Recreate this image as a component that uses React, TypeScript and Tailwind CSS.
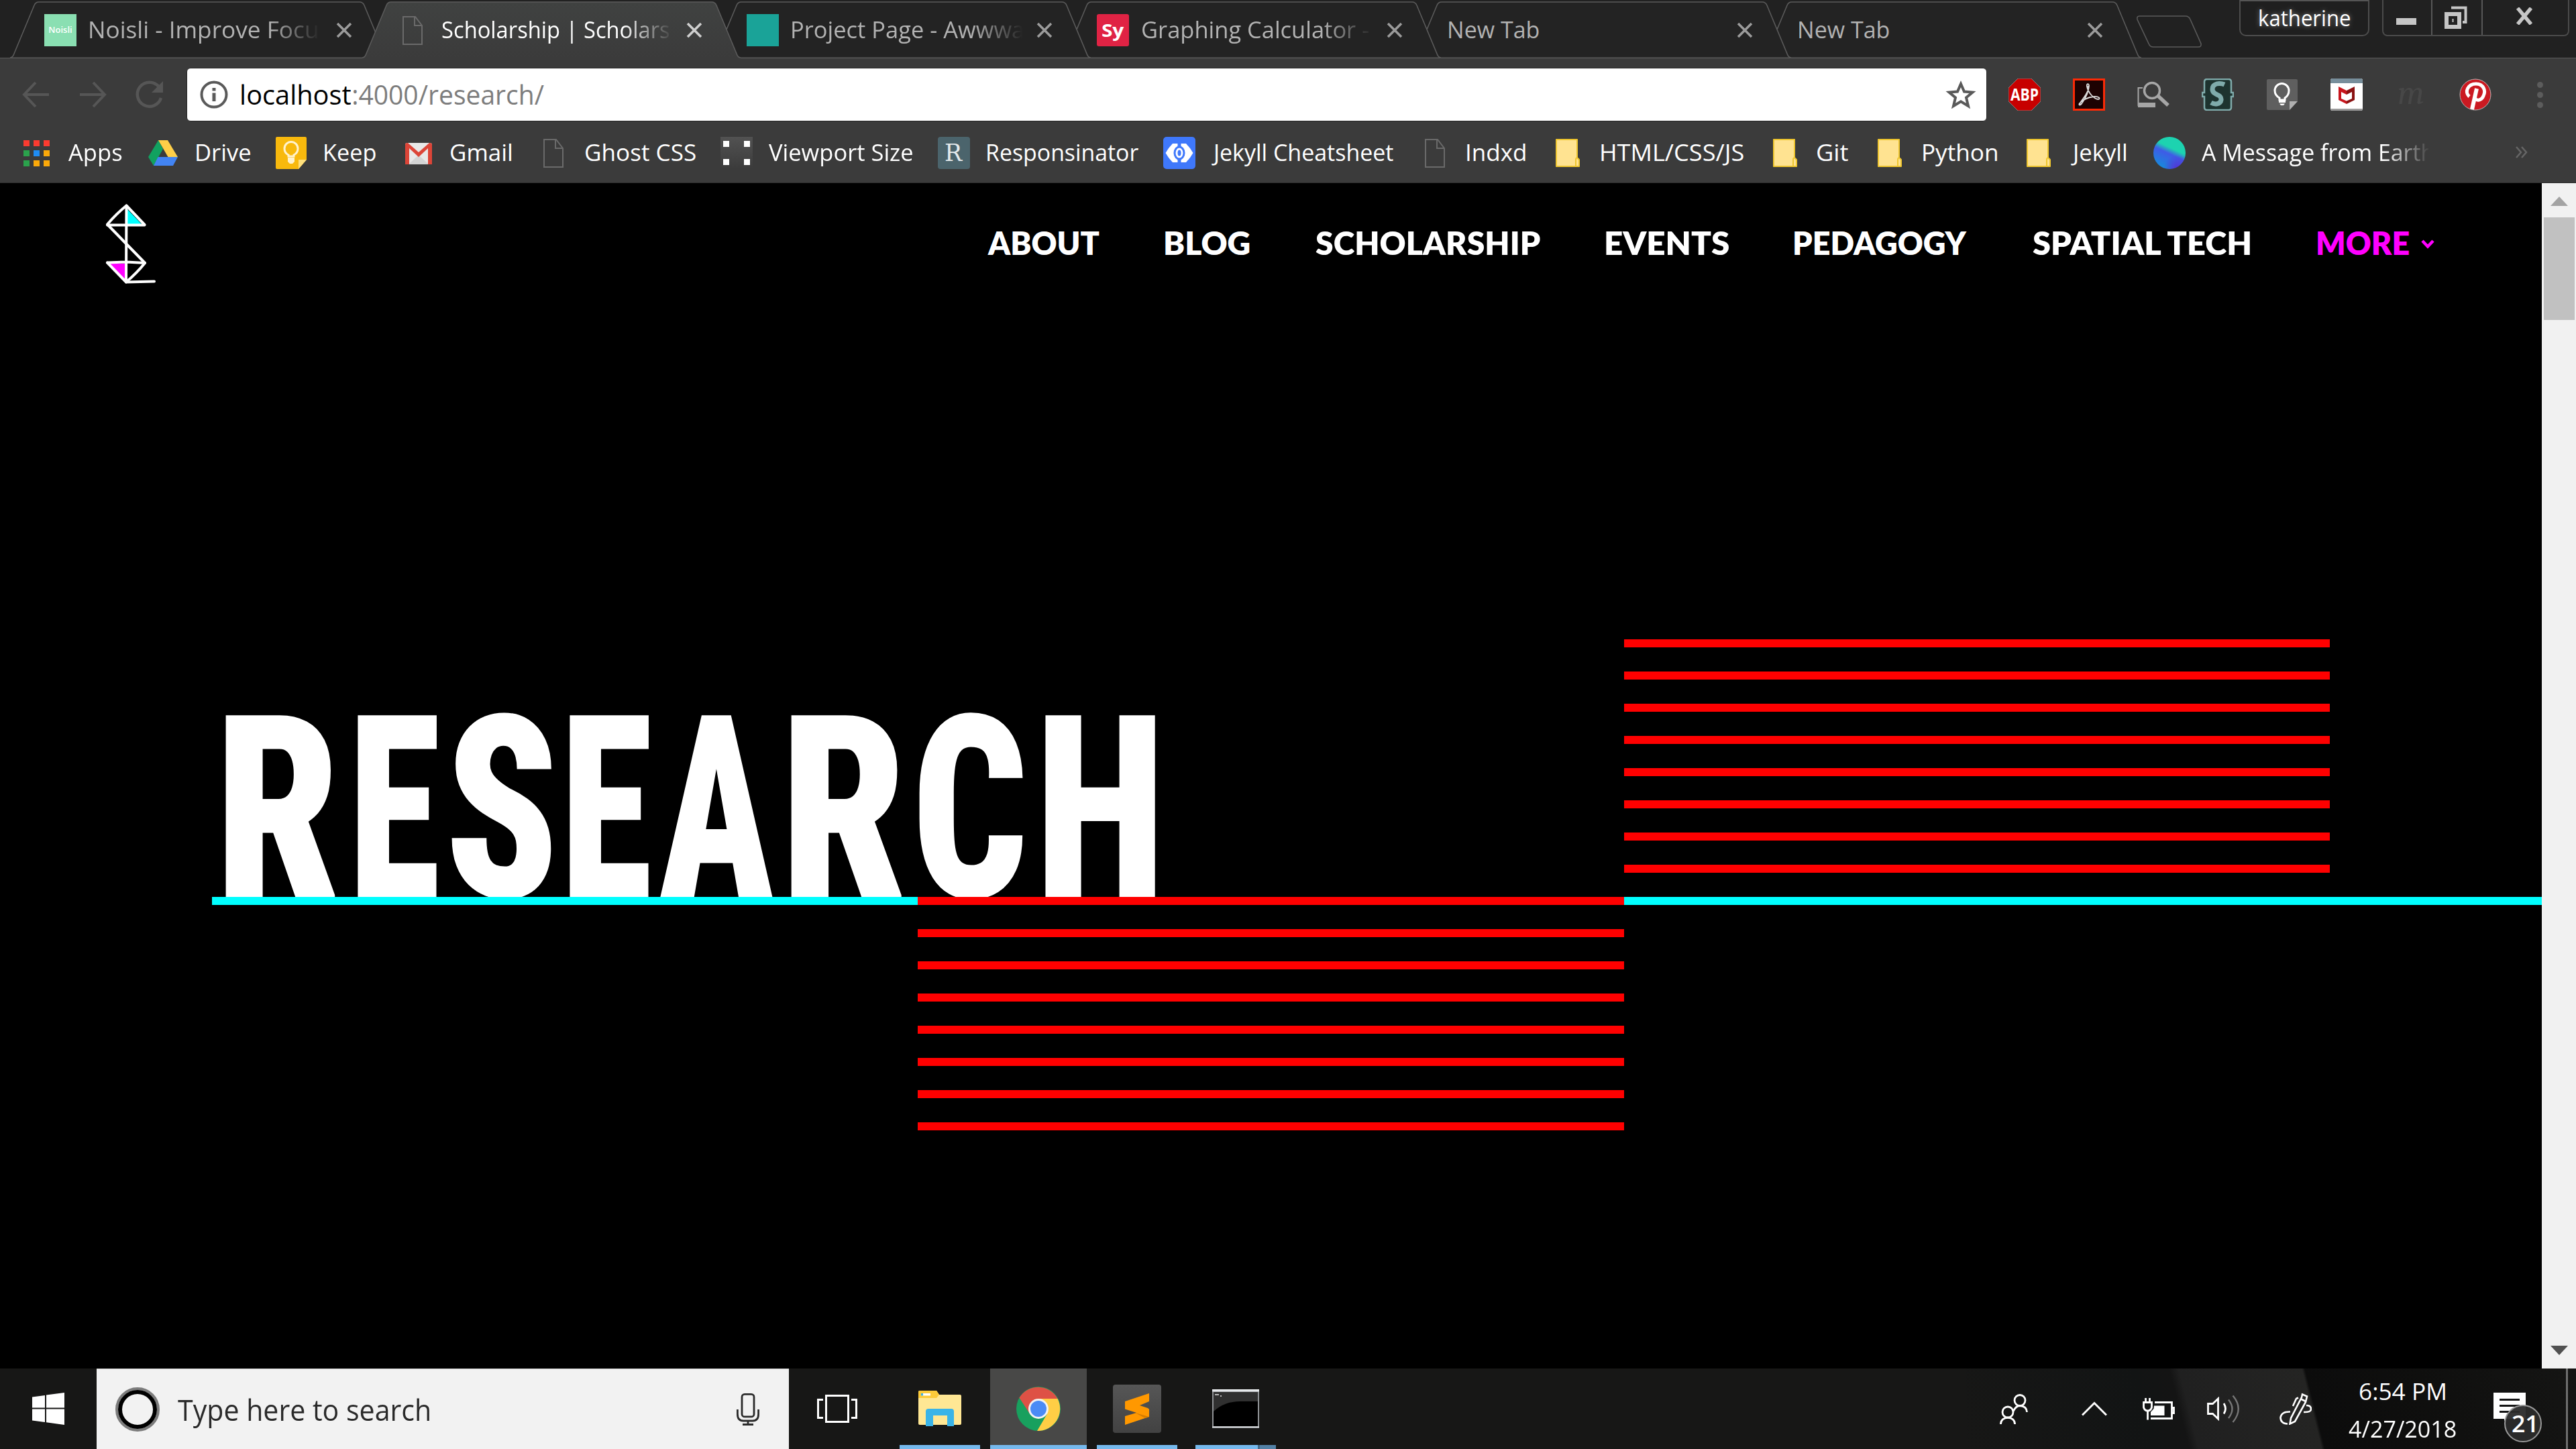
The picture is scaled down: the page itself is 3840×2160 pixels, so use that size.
import { useLayoutEffect, useRef, useState, type ReactNode } from 'react'

/* Text squeezed so that its ink spans exactly `w` pixels, starting at the box's left edge. */
function Fit({ t, w, upTo, className = '' }: { t: string; w: number; upTo?: string; className?: string }) {
  const ref = useRef<HTMLSpanElement>(null)
  const [tf, setTf] = useState('none')
  useLayoutEffect(() => {
    const el = ref.current
    if (!el) return
    const cs = getComputedStyle(el)
    const ctx = document.createElement('canvas').getContext('2d') as any
    if (!ctx) return
    ctx.font = `${cs.fontStyle} ${cs.fontWeight} ${cs.fontSize} ${cs.fontFamily}`
    if (cs.fontStretch === '75%') ctx.fontStretch = 'condensed'
    const m = ctx.measureText(upTo ?? t)
    const s = w / (m.actualBoundingBoxLeft + m.actualBoundingBoxRight)
    setTf(`translateX(${m.actualBoundingBoxLeft * s}px) scaleX(${s})`)
  }, [t, w, upTo])
  return (
    <span className={`block shrink-0 whitespace-nowrap ${className}`} style={{ width: w }}>
      <span ref={ref} className="inline-block origin-left whitespace-pre" style={{ transform: tf }}>{t}</span>
    </span>
  )
}

const UI = 'font-["Open_Sans","Noto_Sans",sans-serif]'

/* ---------- tab strip ---------- */

function DocIcon() {
  return (
    <svg viewBox="0 0 48 48" className="size-12" fill="none" stroke="#6a6a6a" strokeWidth="2">
      <path d="M10 4H28L38 17V45H10Z" />
      <path d="M27 4V17H38" />
    </svg>
  )
}

const TAB_PATH = 'M0 86Q4 86 6 80L36 8Q38 3 43 3L521 3Q526 3 528 8L558 80Q560 86 564 86'

type TabData = { title: string; upTo?: string; w: number; icon?: ReactNode; active?: boolean }

const tabs: TabData[] = [
  {
    title: 'Noisli - Improve Focus', upTo: 'Noisli - Improve Focu', w: 339,
    icon: <div className="flex size-12 items-center justify-center bg-[#8adfb2] text-[13px] font-semibold text-white">Noisli</div>,
  },
  { title: 'Scholarship | Scholars', w: 339, icon: <DocIcon />, active: true },
  { title: 'Project Page - Awwwa', upTo: 'Project Page - Awww', w: 327, icon: <div className="size-12 bg-[#1aa398]" /> },
  {
    title: 'Graphing Calculator -', w: 337,
    icon: <div className="flex size-12 items-center justify-center rounded-[3px] bg-[#e02344] text-[27px] font-bold text-white"><Fit t="Sy" w={33} /></div>,
  },
  { title: 'New Tab', w: 134 },
  { title: 'New Tab', w: 134 },
]

function Tab({ tab, i }: { tab: TabData; i: number }) {
  const first = i === 0
  return (
    <div
      className={`relative flex h-[87px] shrink-0 items-center ${first ? 'w-[525px]' : 'w-[522px]'}`}
      style={{ zIndex: tab.active ? 20 : 10 - i }}
    >
      <svg className="absolute left-0 top-0 h-[87px] w-[564px]" viewBox="0 0 564 87" preserveAspectRatio="none">
        <defs>
          <linearGradient id="activeTab" x1="0" y1="0" x2="0" y2="1">
            <stop offset="0" stopColor="#404241" />
            <stop offset="1" stopColor="#3b3b3b" />
          </linearGradient>
        </defs>
        <path d={tab.active ? TAB_PATH + 'V87H0Z' : TAB_PATH} fill={tab.active ? 'url(#activeTab)' : '#232323'} />
        <path d={TAB_PATH} fill="none" stroke="#5b5b5b" strokeWidth="1.6" />
        {!tab.active && <path d="M2 86.3H562" stroke="#5b5b5b" strokeWidth="1.5" />}
      </svg>
      <div className={`relative flex flex-1 items-center ${tab.icon ? 'pl-[51px]' : 'pl-[54px]'} pt-[3px]`}>
        {tab.icon}
        <div
          className={`${tab.icon ? 'ml-5 w-[344px] [mask-image:linear-gradient(to_right,#000_78%,transparent)]' : 'w-[380px]'} overflow-hidden pb-[2px] text-[35px] leading-[50px] ${tab.active ? 'text-white' : 'text-[#b2b2b2]'}`}
        >
          <Fit t={tab.title} upTo={tab.upTo} w={tab.w} />
        </div>
      </div>
      <svg viewBox="0 0 24 24" className={`absolute top-[33px] size-6 ${first ? 'left-[486px]' : 'left-[483px]'}`} stroke={tab.active ? '#cfcfcf' : '#9b9b9b'} strokeWidth="3.600">
        <path d="M2 2L22 22M22 2L2 22" />
      </svg>
    </div>
  )
}

function TabStrip() {
  return (
    <div className="relative flex h-[87px] border-b border-[#5b5b5b] bg-[#212121] pl-[15px]">
      {tabs.map((tab, i) => <Tab key={i} tab={tab} i={i} />)}
      <svg viewBox="0 0 100 50" className="ml-[34px] mt-[22px] h-[50px] w-[100px] shrink-0" fill="none" stroke="#5b5b5b" strokeWidth="1.6">
        <path d="M5 2H74Q79 2 81 7L97 43Q98 48 93 48H26Q21 48 19 43L2 7Q1 2 5 2Z" />
      </svg>
      <div className="absolute right-[308px] top-0 flex h-[54px] w-[194px] items-center justify-center rounded-b-[10px] border-2 border-[#4d4d4d] border-t-[#555] bg-[#1f1f1f] text-[33px] text-white [text-shadow:0_0_8px_#888]">
        <Fit t="katherine" w={135} className="leading-[48px]" />
      </div>
      <div className="absolute right-[10px] top-0 flex h-[54px] w-[279px] overflow-hidden rounded-b-[8px] border-2 border-t-0 border-[#4a4a4a] bg-[#212121]">
        <div className="flex w-[73px] items-center justify-center border-r-2 border-[#575757] pr-1 pt-[12px]">
          <div className="h-[10px] w-[30px] bg-[#c6c6c6]" />
        </div>
        <div className="flex w-[75px] items-center justify-center border-r-2 border-[#575757] pr-1">
          <svg viewBox="0 0 34 34" className="size-[34px]" fill="none" stroke="#c6c6c6">
            <path d="M3 12H22V31H3Z" strokeWidth="6" />
            <path d="M10 2.5H31.500V24H27" strokeWidth="4" />
            <path d="M12.500 19V24" strokeWidth="2" />
          </svg>
        </div>
        <div className="flex flex-1 items-center justify-center pb-1 pr-1">
          <svg viewBox="0 0 28 26" className="h-[26px] w-[28px]" stroke="#c6c6c6" strokeWidth="5.500">
            <path d="M4 1L24 25M24 1L4 25" />
          </svg>
        </div>
      </div>
    </div>
  )
}

/* ---------- toolbar ---------- */

const extensions: ReactNode[] = [
  <svg viewBox="0 0 48 48" className="size-12">
    <path d="M14 0H34L48 14V34L34 48H14L0 34V14Z" fill="#c70000" stroke="#8f8f8f" strokeWidth=".8" />
    <text x="24" y="32.5" textAnchor="middle" textLength="42" lengthAdjust="spacingAndGlyphs" fontSize="25" fontWeight="700" fontFamily="Open Sans" fill="#fff">ABP</text>
  </svg>,
  <svg viewBox="0 0 48 48" className="size-12">
    <path d="M1.500 1.500H46.500V46.500H1.500Z" fill="#1d0202" stroke="#fb2a06" strokeWidth="3" />
    <path d="M10 38C14 30 24 22 24 11C24 7 20 7 21 12C23 22 32 31 38 31C42 30 38 26 31 27C22 28 13 33 10 37C8 40 11 41 14 36C19 29 24 21 23 11" fill="none" stroke="#ddd" strokeWidth="1.800" />
  </svg>,
  <svg viewBox="0 0 48 48" className="size-12" fill="none" stroke="#a6a6a6">
    <path d="M8 14H1.500V40H26" strokeWidth="2" />
    <path d="M1 36H27V43H1Z" fill="#a6a6a6" stroke="none" />
    <circle cx="22" cy="18" r="11.500" strokeWidth="3.500" />
    <path d="M31 26L46 40" strokeWidth="5.500" />
  </svg>,
  <svg viewBox="0 0 48 48" className="size-12">
    <path d="M8 1H40Q44 1 44 5V21H47V27H44V43Q44 47 40 47H8Q4 47 4 43V27H1V21H4V5Q4 1 8 1Z" fill="#1d332f" stroke="#7fabab" strokeWidth="2.500" />
    <path d="M34 9C27 6 16 7 16 16C16 26 30 22 29 32C28 39 19 39 14 36" fill="none" stroke="#7fabab" strokeWidth="7" />
  </svg>,
  <svg viewBox="0 0 48 48" className="size-12">
    <path d="M3 1H45Q47 1 47 3V34L35 47H3Q1 47 1 45V3Q1 1 3 1Z" fill="#5f5f5f" />
    <path d="M47 34H35V47Z" fill="#b0b0b0" />
    <path d="M20 32V29Q13 25 13 18A10.500 10.500 0 0 1 34 18Q34 25 28 29V32Z" fill="none" stroke="#fff" strokeWidth="3" />
    <path d="M19 33H29V36H19ZM20 37.500H28L26 40H22Z" fill="#fff" />
  </svg>,
  <svg viewBox="0 0 48 48" className="size-12">
    <rect x="0" y="0" width="48" height="48" rx="3" fill="#fff" />
    <path d="M3 0H45Q48 0 48 3V7H0V3Q0 0 3 0Z" fill="#778e9b" />
    <path d="M0 45H48Q48 48 45 48H3Q0 48 0 45Z" fill="#9c9c9c" />
    <path d="M12 12L24 18V24L16 20V30L24 33.500V38L12 32Z" fill="#c8161d" />
    <path d="M36 12L24 18V24L32 20V30L24 33.500V38L36 32Z" fill="#8a1212" />
  </svg>,
  <div className="flex size-12 items-center justify-center pb-1 font-serif text-[50px] italic leading-none text-[#474747]">m</div>,
  <svg viewBox="0 0 48 48" className="size-12">
    <circle cx="24" cy="24" r="23" fill="#cb1a22" stroke="#b9b9b9" strokeWidth="1" />
    <path d="M15 27C7 20 13 8 25 8C36 8 40 18 36 26C33 33 26 34 23 29" fill="none" stroke="#fff" strokeWidth="5" />
    <path d="M26 15L19 46" stroke="#fff" strokeWidth="6" />
  </svg>,
]

function Toolbar() {
  return (
    <div className="flex h-[108px] items-center pl-[33px]">
      <svg viewBox="0 0 42 40" className="h-10 w-[42px] shrink-0" fill="none" stroke="#565656" strokeWidth="4">
        <path d="M20 2L3 20L20 38M3 20H40" />
      </svg>
      <svg viewBox="0 0 42 40" className="ml-[42px] h-10 w-[42px] shrink-0" fill="none" stroke="#565656" strokeWidth="4">
        <path d="M22 2L39 20L22 38M39 20H2" />
      </svg>
      <svg viewBox="0 0 42 42" className="ml-[43px] size-[42px] shrink-0" fill="none" stroke="#565656" strokeWidth="4.500">
        <path d="M34.500 9A18 18 0 1 0 38 26" />
        <path d="M41 1V18H24Z" fill="#565656" stroke="none" />
      </svg>
      <div className="ml-[34px] flex h-[80px] w-[2684px] shrink-0 items-center rounded-[6px] border border-[#262626] bg-white pl-[19px] pr-[15px]">
        <svg viewBox="0 0 42 42" className="size-[42px]">
          <circle cx="21" cy="21" r="18.500" fill="none" stroke="#5a5a5a" strokeWidth="4" />
          <path d="M18.500 11H23.500V15.500H18.500ZM18.500 18.500H23.500V31H18.500Z" fill="#5a5a5a" />
        </svg>
        <div className="ml-5 flex pb-[2px] text-[41px] leading-[60px]">
          <Fit t="localhost" w={163} className="text-black" />
          <Fit t=":4000/research/" w={284} className="ml-1 text-[#7d7d7d]" />
        </div>
        <svg viewBox="0 0 46 44" className="ml-auto h-11 w-[46px]" fill="none" stroke="#5a5a5a" strokeWidth="4">
          <path d="M23 6L28 17.500L40.500 18.500L31 26.500L34 39L23 32.300L12 39L15 26.500L5.500 18.500L18 17.500Z" />
        </svg>
      </div>
      <div className="ml-[32px] flex shrink-0 gap-12">
        {extensions.map((e, i) => <div key={i}>{e}</div>)}
      </div>
      <div className="ml-[68px] flex flex-col gap-[6px]">
        {[0, 1, 2].map(i => <div key={i} className="size-[9px] rounded-full bg-[#5c5c5c]" />)}
      </div>
    </div>
  )
}

/* ---------- bookmarks ---------- */

const FolderIcon = () => (
  <svg viewBox="0 0 48 48" className="size-12">
    <path d="M7 4H38V31L41 34V44H7Z" fill="#ffe391" stroke="#efc62f" strokeWidth="2" strokeLinejoin="round" />
    <path d="M36 44V34Q36 31 39 31" fill="none" stroke="#efc62f" strokeWidth="2" />
  </svg>
)

const AppsIcon = () => (
  <div className="grid grid-cols-3 gap-[6px]">
    {['bg-[#fb3b30]', 'bg-[#fb3b30]', 'bg-[#fb3b30]', 'bg-[#2ba24c]', 'bg-[#1f8cf5]', 'bg-[#fba90a]', 'bg-[#2ba24c]', 'bg-[#fba90a]', 'bg-[#fba90a]'].map((c, i) => (
      <div key={i} className={`size-[9px] ${c}`} />
    ))}
  </div>
)

const bookmarks: { label: string; upTo?: string; w: number; item: number; stem?: boolean; icon: ReactNode }[] = [
  { label: 'Apps', w: 80, item: 189, icon: <AppsIcon /> },
  {
    label: 'Drive', w: 80, item: 191, stem: true, icon: (
      <svg viewBox="0 0 48 48" className="size-12">
        <path d="M17 5L24 18L10 43L2 30Z" fill="#11a160" />
        <path d="M17 5H31L46 30H31.500Z" fill="#ffcf48" />
        <path d="M16.500 30H46L39 43H10Z" fill="#4284f3" />
      </svg>
    ),
  },
  {
    label: 'Keep', w: 76, item: 190, stem: true, icon: (
      <svg viewBox="0 0 48 48" className="size-12">
        <path d="M3 0H45Q47 0 47 2V34L35 48H3Q1 48 1 46V2Q1 0 3 0Z" fill="#f8b90d" />
        <path d="M47 34H35V48Z" fill="#ffe07d" />
        <path d="M20 29V27Q14 24 14 17.500A10 10 0 0 1 34 17.500Q34 24 28 27V29Z" fill="none" stroke="#fff3cd" strokeWidth="3" />
        <path d="M19 31H29V37L26 40H22L19 37Z" fill="#fff3cd" />
      </svg>
    ),
  },
  {
    label: 'Gmail', w: 90, item: 201, icon: (
      <svg viewBox="0 0 48 48" className="size-12">
        <rect x="4" y="9" width="40" height="32" rx="3" fill="#e8e8e8" />
        <path d="M9 41L24 27L39 41Z" fill="#d4d4d4" />
        <path d="M4 12Q4 9 7 9H8L24 23L40 9H41Q44 9 44 12V41H38V17L24 30L10 17V41H4Z" fill="#dc4538" />
      </svg>
    ),
  },
  { label: 'Ghost CSS', w: 164, item: 273, icon: <DocIcon /> },
  {
    label: 'Viewport Size', w: 214, item: 324, icon: (
      <div className="grid size-12 grid-cols-2 content-between justify-between bg-gradient-to-b from-[#525252] to-[#3b3b3b] px-1 py-[6px]">
        {['justify-self-start', 'justify-self-end', 'justify-self-start', 'justify-self-end'].map((c, i) => (
          <div key={i} className={`size-[9px] bg-white ${c}`} />
        ))}
      </div>
    ),
  },
  {
    label: 'Responsinator', w: 225, item: 336, stem: true,
    icon: <div className="flex size-12 items-center justify-center rounded-[4px] bg-[#4b646c] font-['DejaVu_Serif',serif] text-[36px] leading-none text-[#e4eaec]"><Fit t="R" w={26} /></div>,
  },
  {
    label: 'Jekyll Cheatsheet', w: 271, item: 381, icon: (
      <svg viewBox="0 0 48 48" className="size-12">
        <rect width="48" height="48" rx="5" fill="#3f78fb" />
        <path d="M14 10H34L40 17L44.500 24L40 31L34 38H14L8 31L3.500 24L8 17Z" fill="#fff" />
        <path d="M21.500 9H26.500V16H21.500ZM21.500 32H26.500V39H21.500Z" fill="#3f78fb" />
        <ellipse cx="24" cy="24" rx="8.500" ry="10.500" fill="#3f78fb" />
        <ellipse cx="24" cy="24" rx="5.500" ry="7.500" fill="#fff" />
        <ellipse cx="24" cy="24" rx="2.500" ry="4.500" fill="#3f78fb" />
      </svg>
    ),
  },
  { label: 'Indxd', w: 87, item: 198, icon: <DocIcon /> },
  { label: 'HTML/CSS/JS', w: 212, item: 324, stem: true, icon: <FolderIcon /> },
  { label: 'Git', w: 46, item: 156, icon: <FolderIcon /> },
  { label: 'Python', w: 110, item: 222, stem: true, icon: <FolderIcon /> },
  { label: 'Jekyll', w: 82, item: 195, icon: <FolderIcon /> },
  {
    label: 'A Message from Earth', upTo: 'A Message from Eart', w: 326, item: 410,
    icon: <div className="size-12 rounded-full bg-[radial-gradient(circle_at_75%_100%,#5a2bd8_0%,transparent_35%),linear-gradient(25deg,#1b86dc_15%,#3f5be6_48%,#1dd3b0_62%)]" />,
  },
]

function Bookmarks() {
  return (
    <div className="flex h-[78px] items-start border-b border-[#2b2b2b] pl-[30px]">
      {bookmarks.map(b => (
        <div key={b.label} className="flex h-[66px] shrink-0 items-center" style={{ width: b.item }}>
          <div className="flex size-12 shrink-0 items-center justify-center">{b.icon}</div>
          <div
            className={`flex-1 pb-[3px] text-[35px] leading-[50px] text-white ${b.stem ? 'ml-[26px]' : 'ml-6'} ${b.upTo ? 'overflow-hidden [mask-image:linear-gradient(to_right,#000_80%,transparent_101%)]' : ''}`}
          >
            <Fit t={b.label} upTo={b.upTo} w={b.w} />
          </div>
        </div>
      ))}
      <svg viewBox="0 0 20 18" className="ml-[129px] mt-[23px] h-[18px] w-5" fill="none" stroke="#666" strokeWidth="2.500">
        <path d="M2 1L9 9L2 17M10 1L17 9L10 17" />
      </svg>
    </div>
  )
}

/* ---------- page ---------- */

function Logo() {
  return (
    <svg viewBox="0 0 76 122" className="h-[122px] w-[76px]" fill="none" stroke="#fff" strokeWidth="4" strokeLinejoin="round" strokeLinecap="round">
      <path d="M32 8L54 31H32Z" fill="#0ff" stroke="none" />
      <path d="M4 90H32V118Z" fill="#f0f" stroke="none" />
      <path d="M31.500 3.500Q16 16 3 31.500L59 89Q47 104 31 117.500L3 88.500M31.500 3.500L58.500 32" />
      <path d="M3 32.500H58.500M3 88.500L31 87.500L59 89M31.500 3.500L31 117.500L73 116.500" />
    </svg>
  )
}

const nav: [string, number][] = [['ABOUT', 167], ['BLOG', 126], ['SCHOLARSHIP', 335], ['EVENTS', 183], ['PEDAGOGY', 257], ['SPATIAL TECH', 327]]

const letters: [string, number, number][] = [
  ['R', 20, 164.5], ['E', 32, 122], ['S', 18.5, 149], ['E', 27, 122],
  ['A', 12, 171], ['R', 25, 166], ['C', 23.5, 160], ['H', 29.5, 164],
]

const RedLines = ({ className }: { className: string }) => (
  <div className={`flex flex-col gap-9 ${className}`}>
    {Array.from({ length: 8 }, (_, i) => <div key={i} className="h-3 bg-[#f00]" />)}
  </div>
)

function Page() {
  return (
    <div className="flex h-[1767px] bg-black">
      <div className="w-[3789px]">
        <header className="flex h-[178px] items-center justify-between pl-[157px] pr-[160px]">
          <div className="pt-1"><Logo /></div>
          <nav className="flex items-center gap-[98px] font-['Lato',sans-serif] text-[47.500px] font-extrabold leading-[60px] text-white">
            {nav.map(([t, w]) => <Fit key={t} t={t} w={w} />)}
            <div className="flex items-center text-[#f0f]">
              <Fit t="MORE" w={136} />
              <svg viewBox="0 0 20 14" className="ml-[18px] mt-[3px] h-[14px] w-5" fill="none" stroke="#f0f" strokeWidth="4.500">
                <path d="M2 2L10 10.500L18 2" />
              </svg>
            </div>
          </nav>
        </header>
        <main className="grid grid-cols-[316px_1052px_1053px_1052px_316px] grid-rows-[384px_auto] pt-[502px]">
          <h1 className="col-span-2 col-start-2 row-start-1 flex overflow-hidden pt-[64px] font-['Roboto',sans-serif] text-[381px] font-black leading-none text-white [font-stretch:75%]">
            {letters.map(([ch, gap, w], i) => (
              <span key={i} className="block shrink-0" style={{ marginLeft: gap }}><Fit t={ch} w={w} /></span>
            ))}
          </h1>
          <RedLines className="col-start-4 row-start-1" />
          <div className="col-start-2 row-start-2 h-3 bg-[#0ff]" />
          <RedLines className="col-start-3 row-start-2" />
          <div className="col-span-2 col-start-4 row-start-2 h-3 bg-[#0ff]" />
        </main>
      </div>
      <div className="flex w-[51px] flex-col items-center bg-[#f1f1f1]">
        <svg viewBox="0 0 26 14" className="mt-[20px] h-[14px] w-[26px]"><path d="M0 14L13 0L26 14Z" fill="#a3a3a3" /></svg>
        <div className="mt-[17px] h-[153px] w-[46px] bg-[#c1c1c1]" />
        <svg viewBox="0 0 26 14" className="mb-[20px] mt-auto h-[14px] w-[26px]"><path d="M0 0L13 14L26 0Z" fill="#505050" /></svg>
      </div>
    </div>
  )
}

/* ---------- taskbar ---------- */

const apps: { icon: ReactNode; bar: ReactNode; active?: boolean }[] = [
  {
    icon: (
      <svg viewBox="0 0 64 54" className="h-[54px] w-16">
        <path d="M2 0H27L31 6H62Q64 6 64 8V49Q64 51 62 51H2Q0 51 0 49V2Q0 0 2 0Z" fill="#ffe794" />
        <path d="M2 0H27L31 6L27 11H0V2Q0 0 2 0Z" fill="#fdcb3a" />
        <path d="M4 4H18V7.500H4Z" fill="#fff" /><path d="M4 4H7V7.500H4Z" fill="#3ab0e6" />
        <path d="M11 53V31Q11 27 15 27H49Q53 27 53 31V53H43V37H22V53Z" fill="#3ab4e8" />
      </svg>
    ),
    bar: <div className="h-[6px] w-[120px] bg-[#76b9ed]" />,
  },
  {
    active: true,
    icon: (
      <svg viewBox="0 0 66 66" className="size-[66px]">
        <circle cx="33" cy="33" r="33" fill="#18a05e" />
        <path d="M33 18H61.600A33 33 0 0 1 31 66L46 40.500Z" fill="#ffce45" />
        <path d="M4.400 16.500A33 33 0 0 1 61.600 18H33L20 40.500Z" fill="#de5145" />
        <circle cx="33" cy="33" r="15" fill="#f2f2f2" />
        <circle cx="33" cy="33" r="12" fill="#4b8bf5" />
      </svg>
    ),
    bar: <div className="h-[6px] w-[144px] bg-[#76b9ed]" />,
  },
  {
    icon: (
      <div className="flex size-[72px] items-center justify-center rounded-[4px] bg-gradient-to-b from-[#565656] to-[#424242]">
        <svg viewBox="0 0 36 47" className="h-[47px] w-9">
          <path d="M0 34L36 23.500V35L0 47Z" fill="#ff9800" />
          <path d="M0 23.500L36 35V25Q36 23 34 22L22 18L36 12V0L0 12Z" fill="#ff9800" />
          <path d="M15 29L36 35L30 37Z" fill="#d67d00" />
        </svg>
      </div>
    ),
    bar: <div className="h-[6px] w-[120px] bg-[#76b9ed]" />,
  },
  {
    icon: (
      <svg viewBox="0 0 70 58" className="h-[58px] w-[70px]">
        <rect width="70" height="58" fill="#8e9194" />
        <rect width="70" height="3.500" fill="#e6e9ec" /><rect y="55.500" width="70" height="1.500" fill="#e6e9ec" />
        <rect x="2" y="4" width="66" height="51" fill="#303030" />
        <path d="M2 33Q18 18 42 18H68V55H2Z" fill="#000" />
        <path d="M4 8H10M12 10H14" stroke="#bbb" strokeWidth="2" />
      </svg>
    ),
    bar: <div className="flex h-[6px] w-[120px]"><div className="w-[93px] bg-[#76b9ed]" /><div className="w-[3px] bg-[#446a88]" /><div className="flex-1 bg-[#5381a6]" /></div>,
  },
]

function Taskbar() {
  return (
    <div className="flex h-[120px] bg-[#171716]">
      <div className="flex w-[144px] items-center justify-center">
        <svg viewBox="0 0 48 48" className="size-12" fill="#fff">
          <path d="M0 6.500L19 4V22.500H0ZM21 3.500L48 0V22.500H21ZM0 24.500H19V44L0 41.500ZM21 24.500H48V48L21 44.300Z" />
        </svg>
      </div>
      <div className="flex w-[1032px] items-center border-t border-[#c4c4c4] bg-[#f2f2f2] pl-7 pr-[44px]">
        <svg viewBox="0 0 66 66" className="size-[66px]" fill="none">
          <circle cx="33" cy="33" r="31" stroke="#7c7c7c" strokeWidth="4" />
          <circle cx="33" cy="33" r="26" stroke="#000" strokeWidth="6" />
        </svg>
        <Fit t="Type here to search" w={375} className="ml-[27px] pt-[2px] text-[43px] leading-[60px] text-[#2a2a2a]" />
        <svg viewBox="0 0 34 48" className="ml-auto h-12 w-[34px]" fill="none" stroke="#2b2b2b" strokeWidth="2.800">
          <rect x="8" y="1.400" width="18" height="33.500" rx="4" />
          <path d="M1.400 24V31Q1.400 41 10 41H24Q32.600 41 32.600 31V24M17 41V46.500M9 46.500H25" />
        </svg>
      </div>
      <div className="mr-[9px] flex w-[144px] items-center justify-center">
        <svg viewBox="0 0 60 42" className="h-[42px] w-[60px]" fill="none" stroke="#fff" strokeWidth="3">
          <path d="M13.500 1.500H46.500V40.500H13.500ZM9 7.500H1.500V34.500H9M51 7.500H58.500V34.500H51" />
        </svg>
      </div>
      <div className="flex gap-[3px]">
        {apps.map((a, i) => (
          <div key={i} className={`relative flex w-[144px] items-center justify-center ${a.active ? 'bg-[#484847]' : ''}`}>
            {a.icon}
            <div className="absolute inset-x-0 bottom-0 flex justify-center">{a.bar}</div>
          </div>
        ))}
      </div>
      <div className="ml-auto flex w-[910px] bg-[linear-gradient(76deg,#171716_0%,#121414_30%,#141414_35.500%,#202020_37%,#242423_56.500%,#0c0c0c_57%,#0f0f0e_75%,#151514_100%)]">
        <div className="flex w-[144px] items-center justify-center">
          <svg viewBox="0 0 42 45" className="h-[45px] w-[42px]" fill="none" stroke="#fff" strokeWidth="2.800">
            <circle cx="30" cy="9.500" r="8" /><circle cx="12" cy="27" r="8" />
            <path d="M1.400 45C1.400 32 22.600 32 22.600 45M20 26Q24 17.500 30 17.500Q40 18 40.500 27" />
          </svg>
        </div>
        <div className="flex w-24 items-center justify-center">
          <svg viewBox="0 0 38 22" className="h-[22px] w-[38px]" fill="none" stroke="#fff" strokeWidth="3"><path d="M1 20.500L19 2.500L37 20.500" /></svg>
        </div>
        <div className="flex w-24 items-center justify-center">
          <svg viewBox="0 0 48 34" className="h-[34px] w-12" fill="none" stroke="#fff" strokeWidth="2.800">
            <path d="M18 7.500H43.500V31.500H12M43 15.500H46.500V23.500H43M7.500 20V33.500" />
            <path d="M1.500 7.500H13.500V15Q12 20 7.500 20Q3 20 1.500 15ZM4.500 7V1M10.500 7V1" />
            <path d="M17 12.500H32.500V27H12V22L16.500 17Z" fill="#fff" stroke="none" />
          </svg>
        </div>
        <div className="flex w-24 items-center justify-center">
          <svg viewBox="0 0 48 42" className="h-[42px] w-12" fill="none" stroke="#fff" strokeWidth="2.800">
            <path d="M1.500 13.500H8.500L16.500 6V36L8.500 28.500H1.500ZM25 13Q30 21 25 28.500" />
            <path d="M32 7.500Q43 21 32 35M38.500 1.500Q55 21 38.500 41" stroke="#777" strokeWidth="2.400" />
          </svg>
        </div>
        <div className="flex w-[120px] items-center justify-center">
          <svg viewBox="0 0 48 48" className="size-12" fill="none" stroke="#fff" strokeWidth="2.600">
            <path d="M34 2.500L41 5.500L39 14L23 43L15.500 46.500L17 38L33 7ZM31 9L39 13M28 7.500L25 9L20 20M16 28.500Q3 28 1.500 37Q1.500 46 12 46.500M40 19Q47 19 47 24.500Q47 29.500 36 29" />
          </svg>
        </div>
        <div className="flex w-[198px] flex-col items-center justify-center pt-[2px] text-[35.500px] leading-[56px] text-white">
          <Fit t="6:54 PM" w={127} />
          <Fit t="4/27/2018" w={160} />
        </div>
        <div className="relative flex w-[145px] pl-[37px] pt-9">
          <svg viewBox="0 0 48 42" className="h-[42px] w-12">
            <path d="M0 0H48V39H19L16 42V39H0Z" fill="#fff" />
            <path d="M9 10.500H39M9 19.500H39M9 28.500H39" stroke="#151515" strokeWidth="3" />
          </svg>
          <div className="absolute left-[53px] top-[54px] flex size-[56px] items-center justify-center rounded-full border-2 border-[#9a9a9a] bg-[#2b2b2b]/95 text-[34px] font-semibold leading-none text-white">
            <Fit t="21" w={33} />
          </div>
        </div>
        <div className="w-[3px] bg-[#6f6f6f]" />
        <div className="w-3" />
      </div>
    </div>
  )
}

export default function App() {
  return (
    <div className={`h-[2160px] w-[3840px] overflow-hidden bg-[#3b3b3b] ${UI}`}>
      <TabStrip />
      <Toolbar />
      <Bookmarks />
      <Page />
      <Taskbar />
    </div>
  )
}
